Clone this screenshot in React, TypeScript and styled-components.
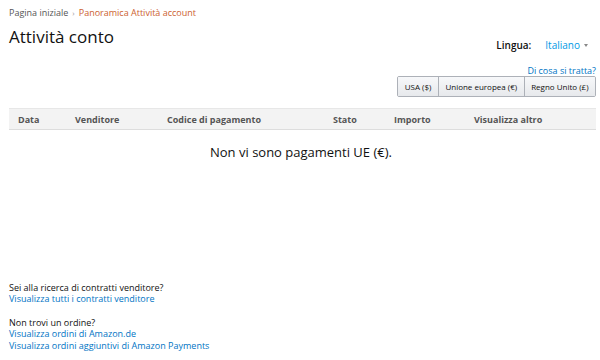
import React from "react";
import styled, { createGlobalStyle } from "styled-components";

const GlobalStyle = createGlobalStyle`
  html, body {
    margin: 0;
    padding: 0;
    background: #fff;
  }
  body {
    font-family: "Open Sans", "Liberation Sans", Arial, sans-serif;
    color: #111;
    font-size: 10px;
  }
`;

const Page = styled.div`
  width: 600px;
  height: 360px;
  box-sizing: border-box;
  padding: 6px 4px 0 9px;
  display: flex;
  flex-direction: column;
`;

const Breadcrumb = styled.div`
  display: flex;
  align-items: center;
  gap: 4px;
  font-size: 9px;
  line-height: 14px;
  color: #555;
`;

const Crumb = styled.span<{ active?: boolean }>`
  color: ${(p) => (p.active ? "#cc6130" : "#555")};
`;

const Sep = styled.span`
  color: #999;
  font-size: 8px;
`;

const HeaderRow = styled.div`
  display: flex;
  justify-content: space-between;
  align-items: flex-start;
  margin-top: 6px;
`;

const Title = styled.h1`
  margin: 0;
  font-size: 17px;
  font-weight: 400;
  line-height: 22px;
  color: #111;
`;

const LangBox = styled.div`
  display: flex;
  align-items: center;
  gap: 14px;
  margin-top: 12px;
  margin-right: 8px;
  font-size: 10px;
`;

const LangLabel = styled.span`
  font-weight: 600;
  color: #111;
`;

const LangValue = styled.span`
  color: #0099e5;
  display: flex;
  align-items: center;
  gap: 4px;
`;

const Caret = styled.span`
  width: 0;
  height: 0;
  border-left: 2px solid transparent;
  border-right: 2px solid transparent;
  border-top: 3px solid #888;
`;

const RightTools = styled.div`
  display: flex;
  flex-direction: column;
  align-items: flex-end;
  margin-top: 13px;
`;

const Link = styled.a`
  color: #0066c0;
  text-decoration: none;
  cursor: pointer;
`;

const HelpLink = styled(Link)`
  font-size: 9px;
  line-height: 12px;
  color: #0074c4;
`;

const ButtonGroup = styled.div`
  display: flex;
  margin-top: -1px;
  border: 1px solid #adb1b8;
  border-radius: 2px;
  overflow: hidden;
`;

const CurrencyButton = styled.button`
  font-family: inherit;
  font-size: 8px;
  color: #111;
  height: 19px;
  padding: 0 6.5px;
  border: none;
  border-left: 1px solid #adb1b8;
  background: linear-gradient(to bottom, #f7f8fa, #e7e9ec);
  cursor: pointer;
  &:first-child {
    border-left: none;
  }
`;

const Table = styled.div`
  margin-top: 11px;
`;

const TableHead = styled.div`
  display: grid;
  grid-template-columns: 57px 92px 166px 61px 80px 1fr;
  height: 20px;
  align-items: center;
  padding-left: 9px;
  background: #f3f3f3;
  border-top: 1px solid #e7e7e7;
  border-bottom: 1px solid #dddddd;
  font-size: 9px;
  font-weight: 700;
  color: #555;
`;

const Empty = styled.div`
  text-align: center;
  font-size: 13px;
  line-height: 16px;
  margin-top: 14px;
  padding-right: 3px;
  color: #111;
`;

const Footer = styled.div`
  margin-top: auto;
  margin-bottom: 9px;
  display: flex;
  flex-direction: column;
  gap: 12px;
  font-size: 9px;
  line-height: 11.5px;
`;

const FooterBlock = styled.div`
  display: flex;
  flex-direction: column;
`;

const FooterLink = styled(Link)`
  color: #0074c4;
`;

export default function App() {
  const columns = [
    "Data",
    "Venditore",
    "Codice di pagamento",
    "Stato",
    "Importo",
    "Visualizza altro",
  ];
  return (
    <>
      <GlobalStyle />
      <Page>
        <Breadcrumb>
          <Crumb>Pagina iniziale</Crumb>
          <Sep>›</Sep>
          <Crumb active>Panoramica Attività account</Crumb>
        </Breadcrumb>
        <HeaderRow>
          <Title>Attività conto</Title>
          <LangBox>
            <LangLabel>Lingua:</LangLabel>
            <LangValue>
              Italiano <Caret />
            </LangValue>
          </LangBox>
        </HeaderRow>
        <RightTools>
          <HelpLink>Di cosa si tratta?</HelpLink>
          <ButtonGroup>
            <CurrencyButton>USA ($)</CurrencyButton>
            <CurrencyButton>Unione europea (€)</CurrencyButton>
            <CurrencyButton>Regno Unito (£)</CurrencyButton>
          </ButtonGroup>
        </RightTools>
        <Table>
          <TableHead>
            {columns.map((c) => (
              <span key={c}>{c}</span>
            ))}
          </TableHead>
          <Empty>Non vi sono pagamenti UE (€).</Empty>
        </Table>
        <Footer>
          <FooterBlock>
            <span>Sei alla ricerca di contratti venditore?</span>
            <FooterLink>Visualizza tutti i contratti venditore</FooterLink>
          </FooterBlock>
          <FooterBlock>
            <span>Non trovi un ordine?</span>
            <FooterLink>Visualizza ordini di Amazon.de</FooterLink>
            <FooterLink>Visualizza ordini aggiuntivi di Amazon Payments</FooterLink>
          </FooterBlock>
        </Footer>
      </Page>
    </>
  );
}
